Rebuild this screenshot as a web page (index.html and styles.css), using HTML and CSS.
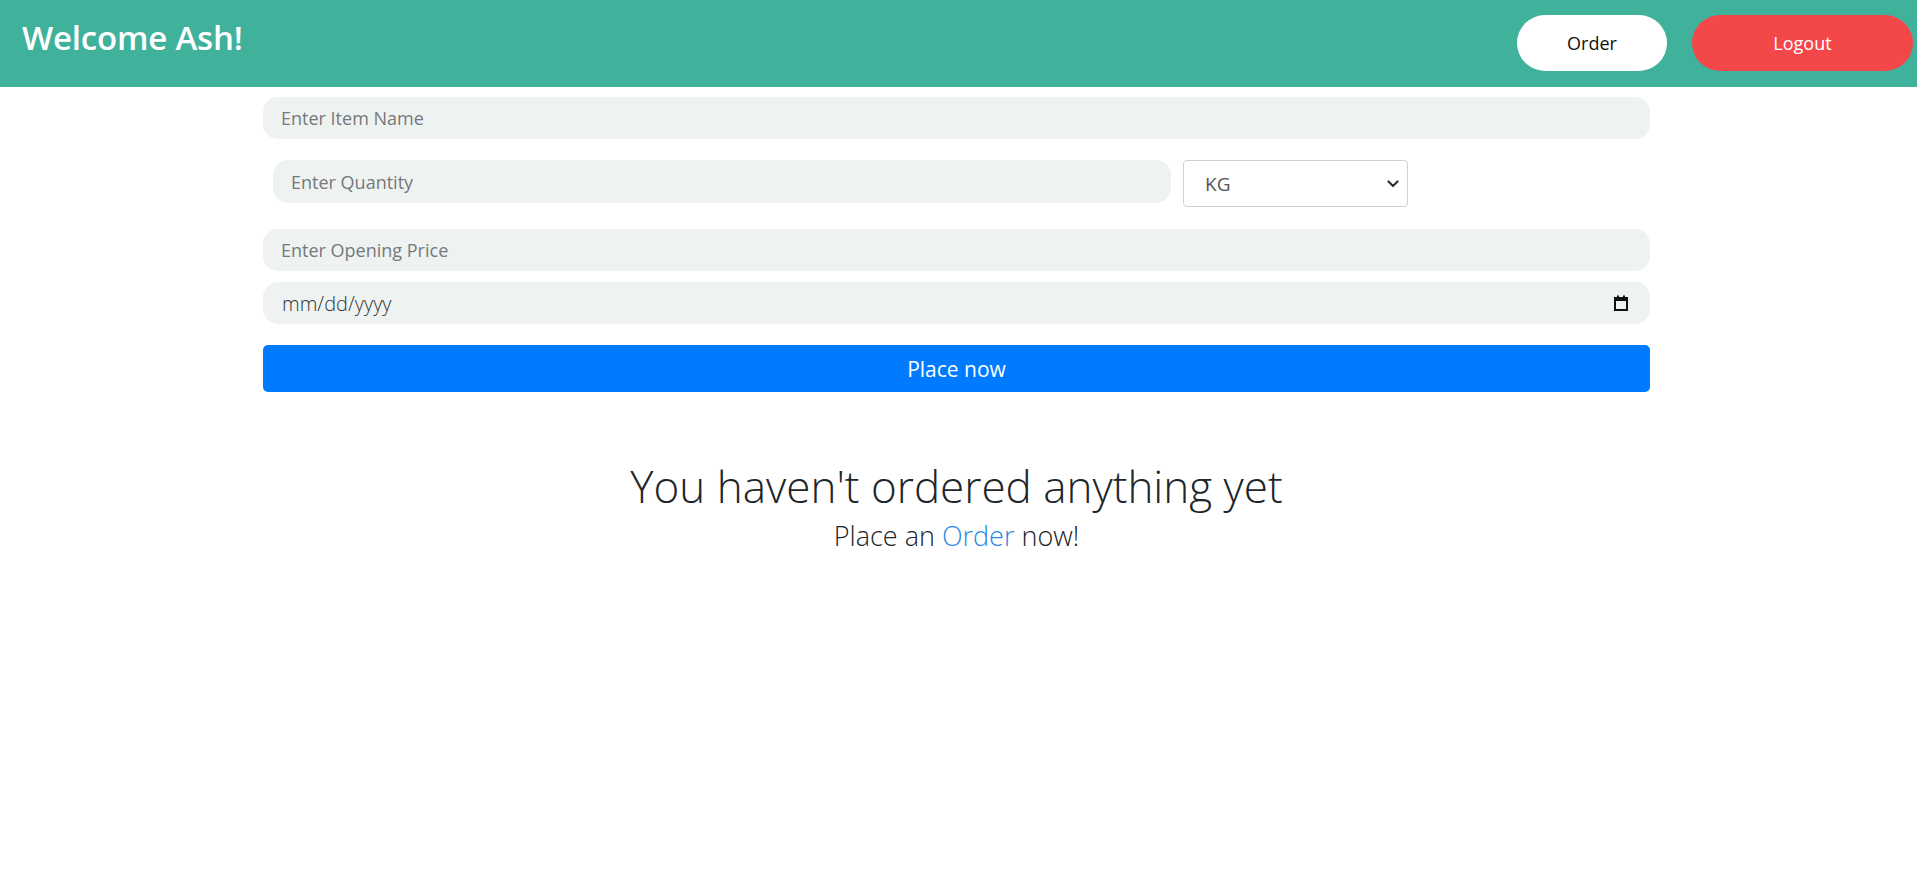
FILE: index.html
```html
<!DOCTYPE html>
<html lang="en">
<head>
<meta charset="utf-8">
<title>Orders</title>
<link rel="stylesheet" href="styles.css">
</head>
<body>
<header class="topbar">
  <h1 class="welcome">Welcome Ash!</h1>
  <nav class="nav">
    <button class="btn-order" type="button">Order</button>
    <button class="btn-logout" type="button">Logout</button>
  </nav>
</header>
<main class="content">
  <form class="order-form">
    <input class="field" type="text" placeholder="Enter Item Name">
    <div class="qty-row">
      <input class="field qty" type="text" placeholder="Enter Quantity">
      <div class="unit">
        <span class="unit-value">KG</span>
        <svg class="chev" width="12" height="8" viewBox="0 0 12 8"><path d="M1.5 1.5 L6 6 L10.5 1.5" fill="none" stroke="#333" stroke-width="2.2" stroke-linecap="round" stroke-linejoin="round"/></svg>
      </div>
    </div>
    <input class="field price" type="text" placeholder="Enter Opening Price">
    <div class="field date">
      <span class="date-text">mm/dd/yyyy</span>
      <svg class="cal" width="14" height="16" viewBox="0 0 14 16"><rect x="1" y="3" width="12" height="12" fill="none" stroke="#111" stroke-width="2"/><rect x="1" y="3" width="12" height="3" fill="#111"/><rect x="3" y="0.5" width="2" height="3" fill="#111"/><rect x="9" y="0.5" width="2" height="3" fill="#111"/></svg>
    </div>
    <button class="btn-place" type="button">Place now</button>
  </form>
  <section class="empty">
    <h2 class="empty-title">You haven't ordered anything yet</h2>
    <p class="empty-sub">Place an <a class="link" href="#">Order</a> now!</p>
  </section>
</main>
</body>
</html>
```
FILE: styles.css
```css
* { box-sizing: border-box; }
html, body { margin: 0; padding: 0; }
body {
  font-family: "Open Sans", "Liberation Sans", sans-serif;
  background: #ffffff;
  color: #212529;
  width: 1917px;
  overflow: hidden;
}
.topbar {
  height: 87px;
  background: #40b19b;
  display: flex;
  justify-content: space-between;
  align-items: flex-start;
  padding: 0 4px 0 22px;
}
.welcome {
  margin: 15px 0 0;
  font-size: 33px;
  font-weight: 600;
  color: #ffffff;
  letter-spacing: -0.2px;
}
.nav {
  display: flex;
  gap: 25px;
  padding-top: 15px;
}
.nav button {
  height: 56px;
  border: none;
  border-radius: 28px;
  font-family: inherit;
  font-size: 18px;
  font-weight: 500;
}
.btn-order { width: 150px; background: #ffffff; color: #111; }
.btn-logout { width: 221px; background: #f4474a; color: #ffffff; }
.content { width: 1387px; margin: 0 0 0 263px; }
.order-form { display: flex; flex-direction: column; }
.field {
  height: 42px;
  border: none;
  border-radius: 15px;
  background: #eef3f2;
  padding: 0 18px;
  font-family: inherit;
  font-size: 18px;
  color: #333;
  outline: none;
}
.field::placeholder { color: #75797c; }
.order-form > .field:first-child { margin-top: 10px; }
.qty-row {
  display: flex;
  align-items: flex-start;
  gap: 12px;
  margin-top: 21px;
  padding-left: 10px;
  height: 47px;
}
.qty { width: 898px; height: 43px; }
.unit {
  width: 225px;
  height: 47px;
  border: 1px solid #cfd0d2;
  border-radius: 4px;
  background: #fff;
  display: flex;
  align-items: center;
  justify-content: space-between;
  padding: 0 8px 0 21px;
  font-size: 19px;
  color: #555;
}
.price { margin-top: 22px; }
.date {
  margin-top: 11px;
  display: flex;
  align-items: center;
  justify-content: space-between;
  padding: 0 22px 0 19px;
  font-size: 20px;
  font-weight: 300;
  color: #333;
}
.btn-place {
  margin-top: 21px;
  height: 47px;
  border: none;
  border-radius: 5px;
  background: #007bff;
  color: #fff;
  font-family: inherit;
  font-size: 21px;
  font-weight: 400;
}
.empty { text-align: center; padding-top: 68px; }
.empty-title {
  margin: 0;
  font-size: 44px;
  font-weight: 300;
  line-height: 1.2;
  color: #212529;
}
.empty-sub {
  margin: 5px 0 0;
  font-size: 27px;
  font-weight: 300;
  line-height: 1.3;
  color: #212529;
}
.link { color: #2c86e6; text-decoration: none; }
```
